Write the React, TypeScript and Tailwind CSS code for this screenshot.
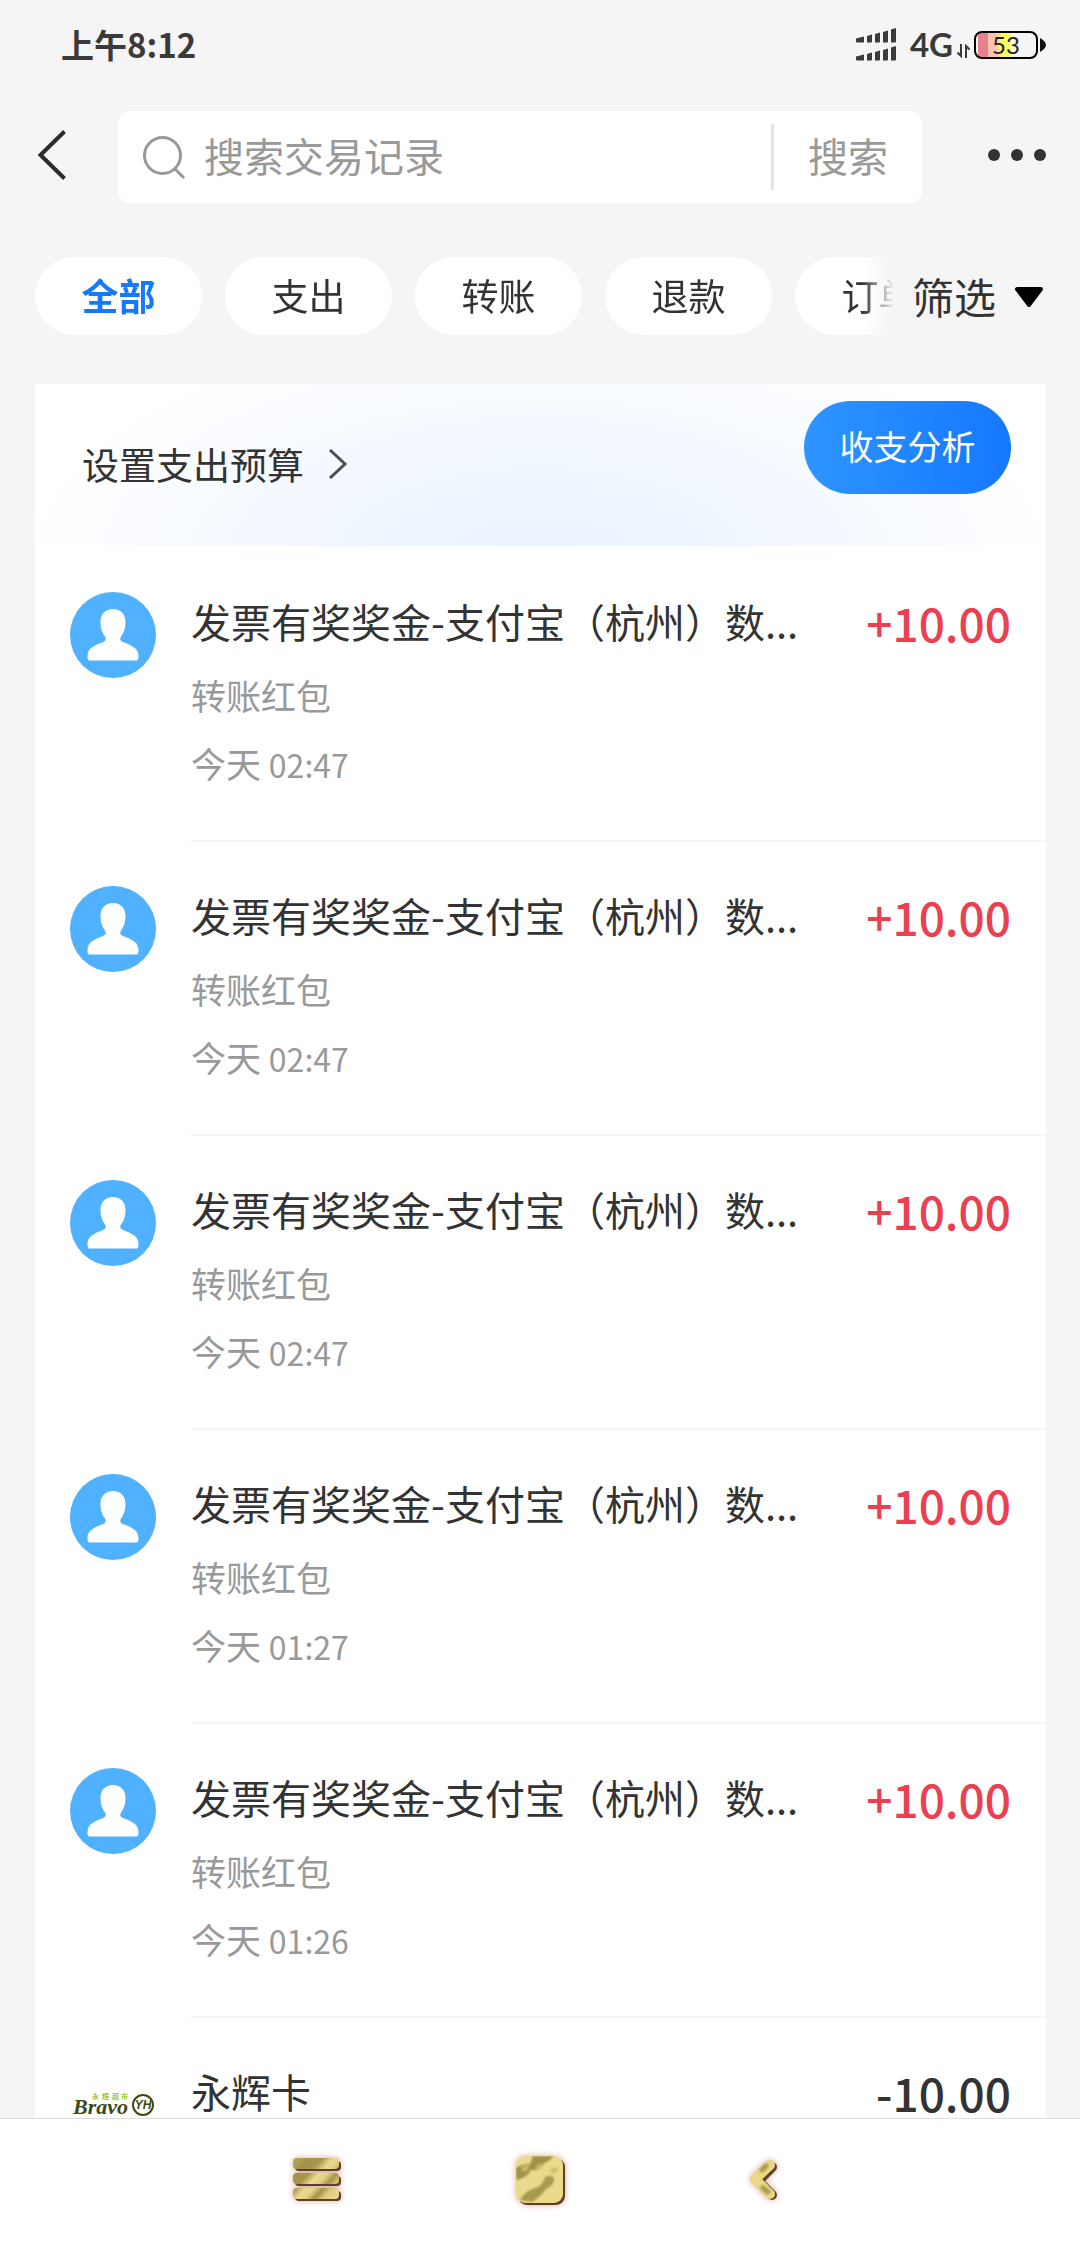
import React from "react";

type Transaction = {
  id: number;
  title: string;
  category: string;
  day: string;
  time: string;
  sign: "+" | "-";
  amount: string;
  logo: "person" | "bravo";
};

const payee = "发票有奖奖金-支付宝（杭州）数...";

const transactions: Transaction[] = [
  { id: 1, title: payee, category: "转账红包", day: "今天", time: "02:47", sign: "+", amount: "10.00", logo: "person" },
  { id: 2, title: payee, category: "转账红包", day: "今天", time: "02:47", sign: "+", amount: "10.00", logo: "person" },
  { id: 3, title: payee, category: "转账红包", day: "今天", time: "02:47", sign: "+", amount: "10.00", logo: "person" },
  { id: 4, title: payee, category: "转账红包", day: "今天", time: "01:27", sign: "+", amount: "10.00", logo: "person" },
  { id: 5, title: payee, category: "转账红包", day: "今天", time: "01:26", sign: "+", amount: "10.00", logo: "person" },
  { id: 6, title: "永辉卡", category: "", day: "", time: "", sign: "-", amount: "10.00", logo: "bravo" },
];

const filters = ["全部", "支出", "转账", "退款", "订单"];

function SignalIcon() {
  return (
    <svg width="40" height="34" viewBox="0 0 40 34" fill="#3a3a3a" aria-hidden="true">
      {[0, 18].map((y) => (
        <g key={y} transform={`translate(0 ${y})`}>
          <path d="M0 10.5l8-2V14.5H1a1 1 0 0 1-1-1z" />
          <path d="M11 8l5-1.500V13.500a1 1 0 0 1-1 1h-4z" />
          <path d="M19 6l5-1.500V13.500a1 1 0 0 1-1 1h-4z" />
          <path d="M27 4l5-1.500V13.500a1 1 0 0 1-1 1h-4z" />
          <path d="M35 1.500l5-1.500V13.500a1 1 0 0 1-1 1h-4z" />
        </g>
      ))}
    </svg>
  );
}

function StatusBar() {
  return (
    <div className="flex h-[89px] shrink-0 items-center justify-between pl-[61px] pr-[34px] text-[#3a3a3a]">
      <span className="text-[33px] font-bold leading-none">上午8:12</span>
      <div className="flex items-center">
        <SignalIcon />
        <span className="ml-[14px] font-['Lato',sans-serif] text-[33px] font-bold leading-none">4G</span>
        <svg className="ml-1 mt-3" width="13" height="14" viewBox="0 0 13 14" fill="none" stroke="#3a3a3a" strokeWidth="2" aria-hidden="true">
          <path d="M4 0V12L0.500 8.500M9 14V2l3.500 3.500" />
        </svg>
        <div className="ml-1 flex h-7 w-16 items-center justify-center rounded-lg border-2 border-black bg-[linear-gradient(90deg,transparent_0_2px,#e8808e_2px_12px,#fbc3b0_12px_20px,#ffff5e_26px_32px,transparent_38px)] font-['Lato',sans-serif] text-[24px] leading-none text-[#222222]">
          53
        </div>
        <svg className="ml-0.5" width="6" height="14" viewBox="0 0 6 14" fill="#111" aria-hidden="true">
          <path d="M0 0C4 2 6 5 6 7s-2 5-6 7z" />
        </svg>
      </div>
    </div>
  );
}

function SearchHeader() {
  return (
    <header className="flex items-center pl-9 pr-[34px] pt-[22px]">
      <button aria-label="返回" className="shrink-0 pb-1">
        <svg width="32" height="50" viewBox="0 0 32 50" fill="none" stroke="#2b2b2b" strokeWidth="4" aria-hidden="true">
          <path d="M28.500 1.500L4.500 25l24 23.500" />
        </svg>
      </button>
      <form className="ml-[50px] flex h-[92px] min-w-0 flex-1 items-center rounded-xl bg-white pl-6" onSubmit={(e) => e.preventDefault()}>
        <svg className="shrink-0" width="44" height="44" viewBox="0 0 44 44" fill="none" stroke="#999" strokeWidth="3" aria-hidden="true">
          <circle cx="20.500" cy="20.500" r="18" />
          <path d="M33 34l9 9" />
        </svg>
        <input
          type="text"
          aria-label="搜索交易记录"
          placeholder="搜索交易记录"
          className="mb-1 ml-[18px] min-w-0 flex-1 bg-transparent text-[40px] leading-[60px] outline-none placeholder:text-[#999999]"
        />
        <div className="h-[66px] w-[3px] shrink-0 bg-[#e2e2e2]" />
        <button type="submit" className="mb-1 shrink-0 px-[34px] text-[40px] leading-[60px] text-[#999999]">
          搜索
        </button>
      </form>
      <button aria-label="更多" className="ml-[66px] flex shrink-0 gap-[11px] pb-1">
        <i className="size-3 rounded-full bg-[#333333]" />
        <i className="size-3 rounded-full bg-[#333333]" />
        <i className="size-3 rounded-full bg-[#333333]" />
      </button>
    </header>
  );
}

function FilterBar() {
  return (
    <div className="mt-[54px] flex items-center pl-[35px] pr-9">
      <div className="flex min-w-0 flex-1 gap-[23px] overflow-hidden [mask-image:linear-gradient(90deg,#000_calc(100%_-_32px),transparent)]">
        {filters.map((label, i) => (
          <button
            key={label}
            aria-pressed={i === 0}
            className={
              i === 0
                ? "h-[78px] w-[167px] shrink-0 rounded-full bg-white text-[37px] font-bold text-[#1677ff]"
                : "h-[78px] w-[167px] shrink-0 rounded-full bg-white text-[37px] text-[#333333]"
            }
          >
            {label}
          </button>
        ))}
      </div>
      <button className="ml-[18px] flex shrink-0 items-center gap-[18px] text-[42px] leading-[60px] text-[#333333]">
        筛选
        <svg width="30" height="22" viewBox="0 0 30 22" aria-hidden="true">
          <path d="M3 4h24L15 20z" fill="#000" stroke="#000" strokeWidth="4" strokeLinejoin="round" />
        </svg>
      </button>
    </div>
  );
}

function PersonAvatar() {
  return (
    <svg width="86" height="86" viewBox="0 0 86 86" aria-hidden="true">
      <circle cx="43" cy="43" r="43" fill="#4fb1ff" />
      <path
        d="M43 17c-7.500 0-12.500 5-12.500 13 0 7 2 11 4.500 14.500 1.500 2.200.8 4.500-2 5.500C25 53 17.500 56 17.500 64c0 3.500.5 4.500 2.500 4.500h46c2 0 2.500-1 2.500-4.500 0-8-7.500-11-15.500-14-2.800-1-3.500-3.300-2-5.500 2.500-3.500 4.500-7.500 4.500-14.500 0-8-5-13-12.500-13z"
        fill="#fff"
      />
    </svg>
  );
}

function BravoLogo() {
  return (
    <svg width="86" height="86" viewBox="0 0 86 86" aria-label="Bravo YH">
      <text x="3" y="52" fontFamily="Liberation Serif, serif" fontSize="22" fontStyle="italic" fontWeight="700" fill="#3d4a12">
        Bravo
      </text>
      <text x="22 32 42 51" y="37" fontFamily="Noto Sans CJK TC, sans-serif" fontSize="7" fontWeight="700" fill="#9dc52b">
        永輝超市
      </text>
      <circle cx="73" cy="43" r="10" fill="none" stroke="#3d4a12" strokeWidth="2" />
      <text x="73" y="47" textAnchor="middle" fontFamily="Liberation Sans, sans-serif" fontSize="12" fontStyle="italic" fontWeight="700" fill="#3d4a12">
        YH
      </text>
    </svg>
  );
}

function TransactionRow({ item }: { item: Transaction }) {
  return (
    <li className="flex pl-[35px]">
      <div className="shrink-0 pt-11">{item.logo === "person" ? <PersonAvatar /> : <BravoLogo />}</div>
      <div className="ml-[35px] flex min-w-0 flex-1 justify-between border-b-2 border-[#f5f5f5] pb-[53px] pr-[35px] pt-[43px]">
        <div className="min-w-0 text-[35px] leading-[48px] text-[#999999]">
          <h2 className="truncate text-[40px] leading-[60px] text-[#333333]">{item.title}</h2>
          <p className="mt-5 h-12">{item.category}</p>
          <p className="mt-5 h-12">
            {item.day} <time className="text-[32px]">{item.time}</time>
          </p>
        </div>
        <span
          className={
            item.sign === "+"
              ? "shrink-0 text-[46px] font-medium leading-[62px] text-[#eb4050]"
              : "shrink-0 text-[46px] font-medium leading-[62px] text-[#333333]"
          }
        >
          {item.sign}
          {item.amount}
        </span>
      </div>
    </li>
  );
}

function NavBar() {
  const glow = "overflow-visible drop-shadow-[0_0_3px_#d9a9a0]";
  return (
    <nav className="h-[130px] shrink-0 border-t border-[#dedede] bg-white">
      <div className="mx-auto grid h-full w-[62%] grid-cols-3 place-items-center pb-2">
        <button aria-label="菜单">
          <svg className={glow} width="48" height="44" viewBox="0 0 48 44" aria-hidden="true">
            <defs>
              <linearGradient id="gold" x1="0" y1="0" x2="48" y2="44" gradientUnits="userSpaceOnUse">
                <stop offset="0" stopColor="#b9aa5c" />
                <stop offset="0.2" stopColor="#a1924a" />
                <stop offset="0.34" stopColor="#a8984e" />
                <stop offset="0.46" stopColor="#eadb8c" />
                <stop offset="0.56" stopColor="#e2d182" />
                <stop offset="0.66" stopColor="#a4944a" />
                <stop offset="0.76" stopColor="#dccb7c" />
                <stop offset="1" stopColor="#f3e49a" />
              </linearGradient>
            </defs>
            {[0, 15, 30].map((y) => (
              <g key={y}>
                <rect x="2" y={y + 3} width="46" height="10" rx="4" fill="#5f3f2c" />
                <rect x="0" y={y} width="46" height="11" rx="4" fill="url(#gold)" />
              </g>
            ))}
          </svg>
        </button>
        <button aria-label="主页">
          <svg className={glow} width="48" height="48" viewBox="0 0 48 48" aria-hidden="true">
            <defs>
              <clipPath id="tile">
                <rect width="47" height="47" rx="9" />
              </clipPath>
            </defs>
            <rect x="2" y="2" width="47" height="47" rx="9" fill="#5f3f2c" />
            <rect width="47" height="47" rx="9" fill="#eadb8c" />
            <g clipPath="url(#tile)">
              <g className="blur-[1px]">
                <path d="M0 12Q6 8 14 8L17 0h20q-2 5-9 7-3 8-13 7-4 8-15 10z" fill="#a1924a" />
                <path d="M4 44q6-10 15-12 8-2 10-11 6-3 9 1 0 8-8 11-6 8-14 13z" fill="#a89850" />
                <path d="M5 12q4-4 8-2 0 5-6 6zM20 10q4-4 7-1-2 5-6 4z" fill="#c9b96a" />
                <path d="M34 14q4-5 8-1-1 5-6 4z" fill="#cdbd70" />
              </g>
            </g>
          </svg>
        </button>
        <button aria-label="后退">
          <svg className={glow} width="28" height="42" viewBox="0 0 28 42" fill="none" strokeWidth="10" strokeLinecap="round" strokeLinejoin="round" aria-hidden="true">
            <path d="M23 8L9 22l14 14" stroke="#5f3f2c" />
            <path d="M21 6L6 20l15 15" stroke="#e9d888" />
            <g className="blur-[1px]" stroke="#aa9a50" strokeWidth="5">
              <path d="M17 7l-4 4M14 29l5 4" />
            </g>
          </svg>
        </button>
      </div>
    </nav>
  );
}

export default function App() {
  return (
    <div className="flex h-screen flex-col overflow-hidden bg-[#f5f5f5] font-['Noto_Sans_CJK_SC',sans-serif]">
      <StatusBar />
      <SearchHeader />
      <FilterBar />
      <main className="ml-[35px] mr-[34px] mt-[49px] min-h-0 flex-1 overflow-hidden bg-white">
        <section className="flex h-[162px] items-start justify-between bg-[radial-gradient(ellipse_52%_150%_at_50%_110%,#e8f2fe,#f3f8ff_50%,#ffffff)] pl-[47px] pr-[35px]">
          <a href="#budget" className="mt-[50px] flex items-center text-[37px] leading-[60px] text-[#333333]">
            设置支出预算
            <svg className="ml-6" width="20" height="30" viewBox="0 0 20 30" fill="none" stroke="#4a4d58" strokeWidth="3" aria-hidden="true">
              <path d="M2 1L17 15L2 29" />
            </svg>
          </a>
          <button className="mt-[17px] h-[93px] w-[207px] rounded-full bg-linear-to-r from-[#2e95ff] to-[#1677ff] pb-1 text-[34px] text-white">
            收支分析
          </button>
        </section>
        <ul className="flex flex-col pt-0.5">
          {transactions.map((item) => (
            <TransactionRow key={item.id} item={item} />
          ))}
        </ul>
      </main>
      <NavBar />
    </div>
  );
}
